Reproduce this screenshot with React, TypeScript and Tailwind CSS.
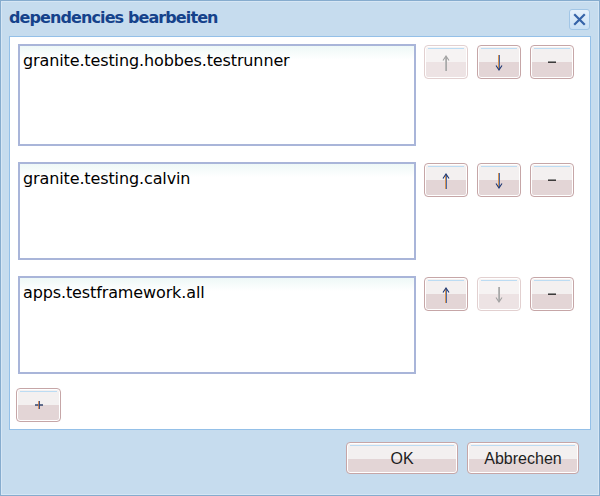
import React from "react";

type Kind = "up" | "down" | "minus" | "plus";

function Glyph({ kind, disabled }: { kind: Kind; disabled?: boolean }) {
  if (kind === "minus") {
    return (
      <svg width="12" height="12" viewBox="0 0 12 12" className="block">
        <rect x="2" y="5.5" width="8" height="1.4" fill="#2b2b2b" />
      </svg>
    );
  }
  if (kind === "plus") {
    return (
      <svg width="12" height="12" viewBox="0 0 12 12" className="block">
        <rect x="2" y="5.3" width="8" height="1.4" fill="#243a66" />
        <rect x="5.2" y="2" width="0.9" height="8" fill="#d07a3a" />
        <rect x="6.1" y="2" width="0.9" height="8" fill="#2a4a8a" />
      </svg>
    );
  }
  const stemA = disabled ? "#b8b8b8" : "#d9944f";
  const stemB = disabled ? "#a8a8a8" : "#4a6aa8";
  const head = disabled ? "#a0a0a0" : "#1c3570";
  if (kind === "up") {
    return (
      <svg width="10" height="16" viewBox="0 0 10 16" className="block">
        <rect x="4" y="2" width="1" height="14" fill={stemA} />
        <rect x="5" y="2" width="1" height="14" fill={stemB} />
        <path d="M2 5.5 L5 1 L8 5.5" fill="none" stroke={head} strokeWidth="1.1" />
      </svg>
    );
  }
  return (
    <svg width="10" height="16" viewBox="0 0 10 16" className="block">
      <rect x="4" y="0" width="1" height="14" fill={stemA} />
      <rect x="5" y="0" width="1" height="14" fill={stemB} />
      <path d="M2 10.5 L5 15 L8 10.5" fill="none" stroke={head} strokeWidth="1.1" />
    </svg>
  );
}

function IconButton({ kind, disabled, wide }: { kind: Kind; disabled?: boolean; wide?: boolean }) {
  return (
    <button
      className={
        (wide ? "w-[45px] " : "w-[44px] ") +
        "relative h-[34px] p-0 rounded-[4px] overflow-hidden flex items-center justify-center shadow-[inset_0_0_0_1px_#ffffff] " +
        (disabled
          ? "border border-[#e2d0d0] bg-[linear-gradient(#f6f3f3_0%,#f6f3f3_50%,#ede3e4_50%,#ede3e4_100%)]"
          : "border border-[#c6a6a7] bg-[linear-gradient(#f3f0f0_0%,#f3f0f0_50%,#e3d5d6_50%,#e3d5d6_100%)]")
      }
    >
      <span className="absolute left-[3px] right-[3px] top-[2px] h-px bg-[#bcdcf3]" />
      <span className={kind === "up" || kind === "down" ? "mt-[2px]" : "mt-[0px]"}>
        <Glyph kind={kind} disabled={disabled} />
      </span>
    </button>
  );
}

function TextButton({ label }: { label: string }) {
  return (
    <button className="relative w-[112px] h-[32px] p-0 rounded-[4px] overflow-hidden border border-[#c6a6a7] shadow-[inset_0_0_0_1px_#ffffff] bg-[linear-gradient(#f3f0f0_0%,#f3f0f0_55%,#e3d5d6_55%,#e3d5d6_100%)] flex items-center justify-center">
      <span className="absolute left-[3px] right-[3px] top-[2px] h-px bg-[#bcdcf3]" />
      <span className="text-[16px] leading-none text-[#1e1e1e] font-['Liberation_Sans',Arial,sans-serif] mt-[1px]">
        {label}
      </span>
    </button>
  );
}

function Row({ text, h, upDisabled, downDisabled }: { text: string; h: string; upDisabled?: boolean; downDisabled?: boolean }) {
  return (
    <div className="flex gap-[8px] pl-[2px]">
      <div
        className={
          h +
          " w-[398px] border-2 border-[#a9b5d9] bg-linear-to-b from-[#eef8f7] to-white to-[14%] pl-[3px] pt-[5px] text-[16px] leading-[19px] text-black tracking-[-0.12px] font-['DejaVu_Sans',Verdana,sans-serif]"
        }
      >
        {text}
      </div>
      <div className="flex gap-[9px] pt-px">
        <IconButton kind="up" disabled={upDisabled} />
        <IconButton kind="down" disabled={downDisabled} />
        <IconButton kind="minus" />
      </div>
    </div>
  );
}

export default function App() {
  return (
    <div className="w-[600px] h-[496px] bg-[#c6dcee] border border-[#86acce] shadow-[inset_0_0_0_1px_#d6e6f4] flex flex-col">
      <div className="h-[35px] flex items-center justify-between pl-[8px] pr-[9px]">
        <span className="text-[16px] font-bold text-[#15428b] tracking-[-0.9px] font-['DejaVu_Sans',Verdana,sans-serif] mt-[-1px]">
          dependencies bearbeiten
        </span>
        <div className="w-[21px] h-[21px] rounded-[3px] border border-[#a2c6e6] bg-linear-to-b from-[#e6f1fb] to-[#c9e0f5] flex items-center justify-center mt-[2px]">
          <svg width="13" height="13" viewBox="0 0 13 13">
            <path d="M2 2 L11 11 M11 2 L2 11" stroke="#3563a8" strokeWidth="2.2" strokeLinecap="square" />
          </svg>
        </div>
      </div>
      <div className="mx-[8px] h-[394px] bg-white border border-[#94c0e8] pl-[6px] pt-[7px] flex flex-col">
        <div className="flex flex-col gap-[16px]">
          <Row text="granite.testing.hobbes.testrunner" h="h-[102px]" upDisabled />
          <Row text="granite.testing.calvin" h="h-[98px]" />
          <Row text="apps.testframework.all" h="h-[98px]" downDisabled />
        </div>
        <div className="mt-[14px]">
          <IconButton kind="plus" wide />
        </div>
      </div>
      <div className="flex justify-end gap-[9px] pr-[20px] pt-[12px]">
        <TextButton label="OK" />
        <TextButton label="Abbrechen" />
      </div>
    </div>
  );
}
